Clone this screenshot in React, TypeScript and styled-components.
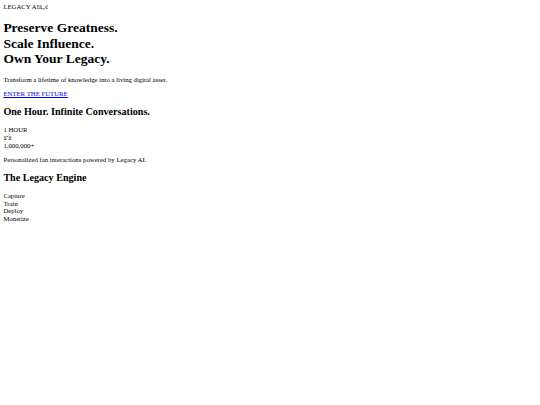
import React from "react";
import styled, { createGlobalStyle } from "styled-components";

const GlobalStyle = createGlobalStyle`
  html, body { margin: 0; padding: 0; background: #ffffff; }
`;

const Page = styled.main`
  padding: 3.375px;
  font-family: "Liberation Serif", "Times New Roman", serif;
  font-size: 6.75px;
  line-height: 7.7625px;
  color: #000000;
`;

const Brand = styled.div``;

const Hero = styled.h1`
  font-size: 13.5px;
  line-height: 15.525px;
  font-weight: bold;
  margin: 9.045px 0;
`;

const Paragraph = styled.p`
  margin: 6.75px 0;
`;

const CtaLink = styled.a`
  color: #0000ee;
  text-decoration: underline;
`;

const SectionTitle = styled.h2`
  font-size: 10.125px;
  line-height: 11.64px;
  font-weight: bold;
  margin: 8.2px 0;
`;

const LineGroup = styled.div``;

const Line = styled.div``;

export default function App() {
  return (
    <>
      <GlobalStyle />
      <Page>
        <Brand>LEGACY AIâ„¢</Brand>
        <Hero>
          Preserve Greatness.
          <br />
          Scale Influence.
          <br />
          Own Your Legacy.
        </Hero>
        <Paragraph>Transform a lifetime of knowledge into a living digital asset.</Paragraph>
        <Paragraph>
          <CtaLink href="#">ENTER THE FUTURE</CtaLink>
        </Paragraph>
        <SectionTitle>One Hour. Infinite Conversations.</SectionTitle>
        <LineGroup>
          <Line>1 HOUR</Line>
          <Line>âˆž</Line>
          <Line>1,000,000+</Line>
        </LineGroup>
        <Paragraph>Personalized fan interactions powered by Legacy AI.</Paragraph>
        <SectionTitle>The Legacy Engine</SectionTitle>
        <LineGroup>
          <Line>Capture</Line>
          <Line>Train</Line>
          <Line>Deploy</Line>
          <Line>Monetize</Line>
        </LineGroup>
      </Page>
    </>
  );
}
